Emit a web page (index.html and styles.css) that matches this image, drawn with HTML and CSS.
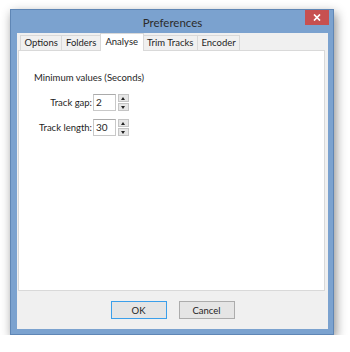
FILE: index.html
```html
<!DOCTYPE html>
<html lang="en">
<head>
    <meta charset="UTF-8">
    <title>Preferences</title>
    <link rel="stylesheet" href="styles.css">
</head>
<body>
    <div class="win">
        <div class="titlebar">
            <span class="title">Preferences</span>
            <span class="close">
                <svg width="8" height="7" viewBox="0 0 8 7"><path d="M1 0.5L7 6.5M7 0.5L1 6.5" stroke="#fff" stroke-width="1.7"/></svg>
            </span>
        </div>
        <div class="client">
            <ul class="tabs">
                <li>Options</li>
                <li>Folders</li>
                <li class="current">Analyse</li>
                <li>Trim Tracks</li>
                <li>Encoder</li>
            </ul>
            <div class="panel">
                <p class="caption">Minimum values (Seconds)</p>
                <div class="row">
                    <label>Track gap:</label>
                    <span class="field">2</span>
                    <span class="spin"><i class="up"></i><i class="down"></i></span>
                </div>
                <div class="row">
                    <label>Track length:</label>
                    <span class="field">30</span>
                    <span class="spin"><i class="up"></i><i class="down"></i></span>
                </div>
            </div>
            <div class="buttons">
                <button class="btn default">OK</button>
                <button class="btn">Cancel</button>
            </div>
        </div>
    </div>
</body>
</html>
```

FILE: styles.css
```css
*{margin: 0; padding: 0; box-sizing: border-box;}
body {background: #fff; font-family: Lato, "Liberation Sans", sans-serif; font-size: 9.5px; color: #1e1e1e;}
ul {list-style: none;}

.win {width: 324px; height: 326px; margin: 9px 0 0 10px; background: #7ba2cf; border: 1px solid #5f86b5; padding: 0 5px 5px 6px; display: flex; flex-direction: column; box-shadow: 2px 4px 10px rgba(0,0,0,0.45);}
.titlebar {height: 23px; display: flex; justify-content: center; align-items: center; position: relative;}
.title {font-size: 11.5px; color: #2b2b2b; margin-top: 1px;}
.close {position: absolute; right: -1px; top: 0; width: 24px; height: 15px; background: #c75050; display: flex; align-items: center; justify-content: center;}

.client {flex: 1; background: #f0f0f0; display: flex; flex-direction: column; padding: 0 3px 0 1px;}
.tabs {display: flex; height: 17px; padding-left: 2px; align-items: flex-end;}
.tabs li {height: 15px; line-height: 14px; padding: 0 3.5px; border: 1px solid #d9d9d9; border-bottom: none; border-left: none; background: #f0f0f0; color: #1e1e1e; white-space: nowrap;}
.tabs li:first-child {border-left: 1px solid #d9d9d9;}
.tabs li.current {height: 18px; background: #fff; border-left: 1px solid #d9d9d9; margin-left: -1px; padding: 0 4.5px; line-height: 15px; position: relative; top: 1px;}

.panel {height: 241px; background: #fff; border: 1px solid #d9d9d9; padding: 20px 0 0 15px;}
.caption {line-height: 13px; margin-bottom: 10px;}
.row {display: flex; align-items: center; height: 17px; margin-bottom: 8px;}
.row label {width: 59px; text-align: right; padding-right: 1px; white-space: nowrap;}
.field {width: 23px; height: 17px; border: 1px solid #c8c8c8; border-top-color: #ababab; padding-left: 2px; line-height: 15px; background: #fff; font-size: 10px;}
.spin {width: 11px; height: 17px; margin-left: 2px; display: flex; flex-direction: column; gap: 1px;}
.spin i {flex: 1; background: #e6e6e6; border: 1px solid #c4c4c4; position: relative;}
.spin i::after {content: ""; position: absolute; left: 2px; border-left: 2.5px solid transparent; border-right: 2.5px solid transparent;}
.spin .up::after {top: 2px; border-bottom: 3px solid #222;}
.spin .down::after {top: 2px; border-top: 3px solid #222;}

.buttons {flex: 1; display: flex; justify-content: center; align-items: center; gap: 12px; padding-left: 2px;}
.btn {width: 56px; height: 18px; font: inherit; color: #1e1e1e; background: #e5e5e5; border: 1px solid #acacac;}
.btn.default {border-color: #3c9fea;}
```
